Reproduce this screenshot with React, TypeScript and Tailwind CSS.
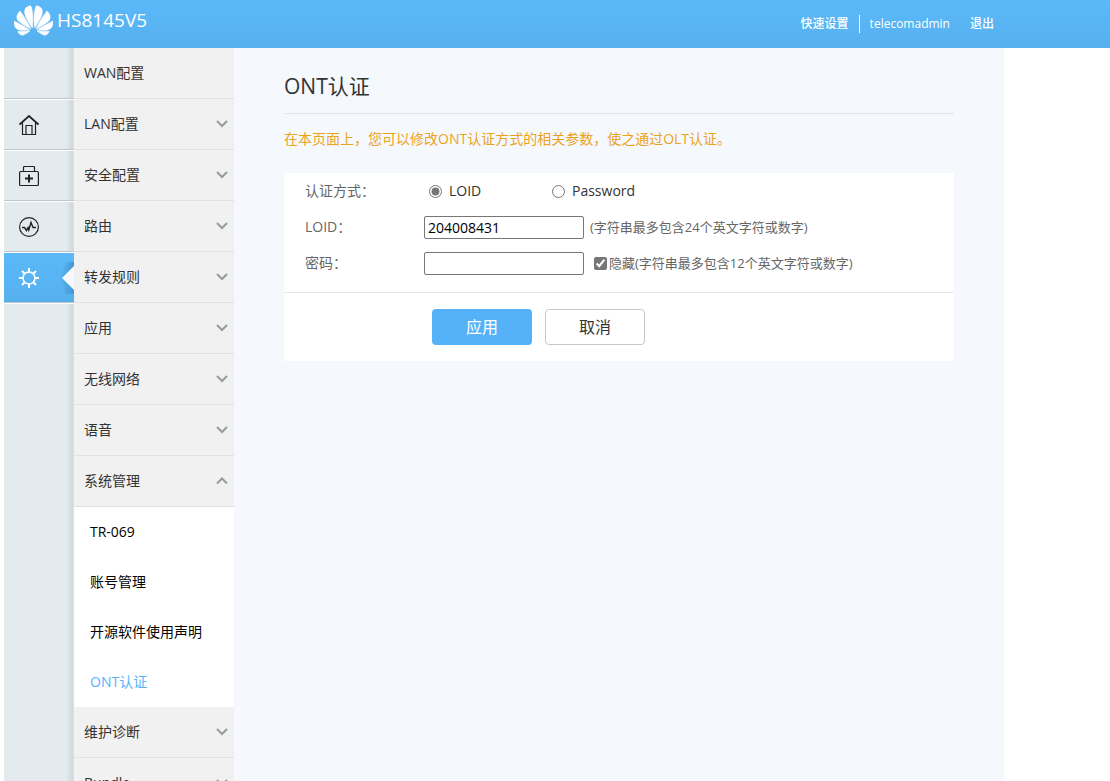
import React, { useState } from "react";
import { SiHuawei } from "react-icons/si";

const menu = [
  { label: "WAN配置", expandable: false },
  { label: "LAN配置", expandable: true },
  { label: "安全配置", expandable: true },
  { label: "路由", expandable: true },
  { label: "转发规则", expandable: true },
  { label: "应用", expandable: true },
  { label: "无线网络", expandable: true },
  { label: "语音", expandable: true },
  {
    label: "系统管理",
    expandable: true,
    children: ["TR-069", "账号管理", "开源软件使用声明", "ONT认证"],
  },
  { label: "维护诊断", expandable: true },
  { label: "Bundle", expandable: true },
];

export default function App() {
  return (
    <div className="flex h-screen flex-col overflow-hidden bg-white font-['Open_Sans','Noto_Sans_CJK_SC',sans-serif] text-sm text-[#333]">
      <Header />
      <div className="ml-1 flex min-h-0 max-w-[1000px] flex-1">
        <Rail />
        <SideMenu />
        <main className="flex-1 bg-[#f5f8fd] px-[50px] pt-6">
          <h1 className="border-b border-[#dfe5e8] pb-[13px] text-[21px] leading-7">ONT认证</h1>
          <p className="mt-[15px] mb-6 leading-5 text-[#eba31d]">
            在本页面上，您可以修改ONT认证方式的相关参数，使之通过OLT认证。
          </p>
          <AuthForm />
        </main>
      </div>
    </div>
  );
}

function Header() {
  return (
    <header className="h-12 shrink-0 bg-linear-to-b from-[#5bb9f9] to-[#56b0ee] text-white">
      <div className="ml-1 flex h-full max-w-[1000px] items-center justify-between pr-[10px] pl-[10px]">
        <div className="flex items-center gap-1 pb-2">
          <SiHuawei className="size-[39px]" stroke="currentColor" strokeWidth="0.3" />
          <span className="text-[19px] leading-6">HS8145V5</span>
        </div>
        <nav className="flex items-center text-xs leading-[18px] font-medium">
          <a href="#quick" className="border-r border-white pr-[10px]">快速设置</a>
          <a href="#user" className="px-[10px]">telecomadmin</a>
          <a href="#logout" className="pl-[10px]">退出</a>
        </nav>
      </div>
    </header>
  );
}

/* Icon column on the far left */
function Rail() {
  return (
    <nav className="flex w-[70px] shrink-0 flex-col bg-[linear-gradient(to_left,#dedfe0_1px,#d0d7db_1px,#e4ebee_8px)]">
      <div className="h-[51px] border-b border-[#bfc4ca]" />
      <RailItem label="首页"><HomeIcon /></RailItem>
      <RailItem label="一键诊断"><KitIcon /></RailItem>
      <RailItem label="系统信息"><PulseIcon /></RailItem>
      <RailItem label="高级配置" active><GearIcon /></RailItem>
      <div className="border-t border-white" />
    </nav>
  );
}

function RailItem({ label, active, children }: {
  label: string;
  active?: boolean;
  children: React.ReactNode;
}) {
  return (
    <a
      href="#"
      aria-label={label}
      className={`relative flex h-[51px] items-center border-t border-t-white border-b border-b-[#bfc4ca] pl-[15px] ${
        active ? "bg-linear-to-b from-[#5bb9f9] to-[#56b0ee] text-white" : "text-[#222]"
      }`}
    >
      {children}
      {active && (
        <svg className="absolute top-[9px] right-0" width="14" height="32" viewBox="0 0 14 32">
          <defs>
            <linearGradient id="notch-shade">
              <stop offset="0" stopColor="#4597d2" stopOpacity="0" />
              <stop offset="1" stopColor="#4597d2" />
            </linearGradient>
          </defs>
          <path d="M6 0h8v32H6L0 16z" fill="url(#notch-shade)" />
          <path d="M14 4L2 16l12 12z" fill="#f5f8fd" />
        </svg>
      )}
    </a>
  );
}

function SideMenu() {
  return (
    <nav className="w-[160px] shrink-0 overflow-hidden bg-[#f1f1f1]">
      {menu.map((item) => (
        <div key={item.label}>
          <button
            type="button"
            className="flex h-[51px] w-full items-center justify-between border-b border-[#e2e2e2] pr-[6px] pl-[10px]"
          >
            {item.label}
            {item.expandable && <Chevron up={!!item.children} />}
          </button>
          {item.children && (
            <ul className="bg-white">
              {item.children.map((child) => (
                <li key={child}>
                  <a
                    href="#"
                    className={`flex h-[50px] items-center pl-4 ${
                      child === "ONT认证" ? "text-[#56b4f8]" : "text-black"
                    }`}
                  >
                    {child}
                  </a>
                </li>
              ))}
            </ul>
          )}
        </div>
      ))}
    </nav>
  );
}

function AuthForm() {
  const [mode, setMode] = useState("loid");
  const [hidden, setHidden] = useState(true);
  const [loid, setLoid] = useState("204008431");
  const [password, setPassword] = useState("");

  return (
    <form className="bg-white" onSubmit={(e) => e.preventDefault()}>
      <div className="border-b border-[#e6e6e6] pb-[11px] pl-[21px] text-[#666]">
        <div className="flex h-9 items-center" role="radiogroup" aria-labelledby="mode-label">
          <span id="mode-label" className="w-[119px]">认证方式：</span>
          <label className="ml-[5px] flex w-[123px] items-center gap-[7px] text-[#333]">
            <input
              type="radio"
              name="mode"
              className="size-[13px] accent-[#767676]"
              checked={mode === "loid"}
              onChange={() => setMode("loid")}
            />
            LOID
          </label>
          <label className="flex items-center gap-[7px] text-[#333]">
            <input
              type="radio"
              name="mode"
              className="size-[13px] accent-[#767676]"
              checked={mode === "password"}
              onChange={() => setMode("password")}
            />
            Password
          </label>
        </div>
        <div className="flex h-9 items-center">
          <label htmlFor="loid" className="w-[119px]">LOID：</label>
          <input
            id="loid"
            type="text"
            maxLength={24}
            className="h-[23px] w-[160px] rounded-xs border border-[#767676] px-[3px] text-black"
            value={loid}
            onChange={(e) => setLoid(e.target.value)}
          />
          <span className="ml-[6px] text-[13px]">(字符串最多包含24个英文字符或数字)</span>
        </div>
        <div className="flex h-9 items-center">
          <label htmlFor="password" className="w-[119px]">密码：</label>
          <input
            id="password"
            type={hidden ? "password" : "text"}
            maxLength={12}
            className="h-[23px] w-[160px] rounded-xs border border-[#767676] px-[3px] text-black"
            value={password}
            onChange={(e) => setPassword(e.target.value)}
          />
          <label className="ml-[10px] flex items-center gap-[2px] text-[13px]">
            <input
              type="checkbox"
              className="size-[13px] accent-[#767676]"
              checked={hidden}
              onChange={(e) => setHidden(e.target.checked)}
            />
            隐藏(字符串最多包含12个英文字符或数字)
          </label>
        </div>
      </div>
      <div className="flex gap-[13px] py-4 pl-[148px] text-base">
        <button type="submit" className="h-9 w-[100px] rounded bg-[#56b2f8] text-white">应用</button>
        <button type="reset" className="h-9 w-[100px] rounded border border-[#c8c8c8] bg-white">取消</button>
      </div>
    </form>
  );
}

function Chevron({ up }: { up: boolean }) {
  return (
    <svg width="12" height="8" viewBox="0 0 12 8" fill="none" stroke="#969ba0" strokeWidth="2">
      <path d={up ? "M1 6.5L6 1.5l5 5" : "M1 1L6 6l5-5"} />
    </svg>
  );
}

function HomeIcon() {
  return (
    <svg width="20" height="20" viewBox="0 0 20 20" fill="none" stroke="currentColor">
      <path d="M.5 9.5L10 1l9.5 8.5" strokeWidth="1.8" />
      <path d="M3.5 8v11.5h13V8M7 19.5v-9h6v9" strokeWidth="1.2" />
    </svg>
  );
}

function KitIcon() {
  return (
    <svg width="20" height="20" viewBox="0 0 20 20" fill="none" stroke="currentColor">
      <rect x=".6" y="5.5" width="18.8" height="14" rx="1" strokeWidth="1.2" />
      <path d="M4.5 5V1.5a1 1 0 0 1 1-1h9a1 1 0 0 1 1 1V5" strokeWidth="1.2" />
      <path d="M10 8.5v8M6 12.5h8" strokeWidth="2" />
    </svg>
  );
}

function PulseIcon() {
  return (
    <svg width="20" height="20" viewBox="0 0 20 20" fill="none" stroke="currentColor">
      <circle cx="10" cy="10" r="9.4" strokeWidth="1.2" />
      <path d="M3 10.5h2.5l2 3 1.500-3 .8 2.500L12 5.500l2 5h3" strokeWidth="1.4" />
    </svg>
  );
}

function GearIcon() {
  return (
    <svg width="20" height="20" viewBox="0 0 20 20" fill="none" stroke="currentColor" strokeWidth="2">
      <circle cx="10" cy="10" r="6" strokeWidth="1.6" />
      <path d="M10 0v4M10 16v4M0 10h4M16 10h4M3 3l2.500 2.500M14.500 14.500L17 17M3 17l2.500-2.500M14.500 5.500L17 3" />
    </svg>
  );
}
